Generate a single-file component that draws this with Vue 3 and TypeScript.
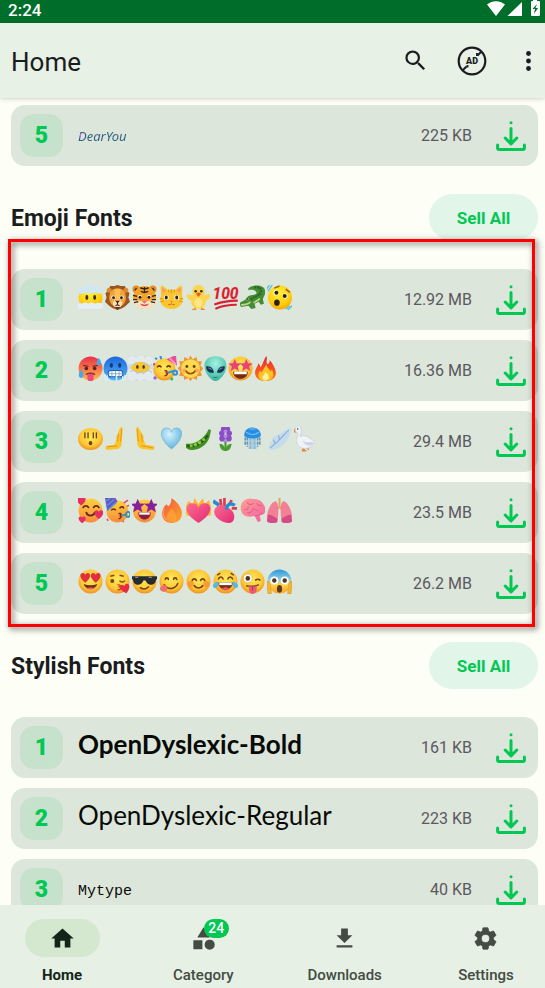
<script setup lang="ts">
import { ref } from 'vue'

interface FontItem {
  name: string
  size: string
  look?: 'handwritten' | 'bold' | 'regular' | 'typewriter'
  emojis?: string[]
  tight?: boolean
}

interface FontSection {
  title: string
  marked: boolean
  items: FontItem[]
}

const recent: FontItem = { name: 'DearYou', size: '225 KB', look: 'handwritten' }

const sections: FontSection[] = [
  {
    title: 'Emoji Fonts',
    marked: true,
    items: [
      { name: 'Emoji set 1', size: '12.92 MB', emojis: ['mist', 'lion', 'tiger', 'cat', 'chick', 'hundred', 'croc', 'shaking'] },
      { name: 'Emoji set 2', size: '16.36 MB', tight: true, emojis: ['hot', 'cold', 'clouds', 'party', 'sun', 'alien', 'starred', 'fire'] },
      { name: 'Emoji set 3', size: '29.4 MB', emojis: ['wide', 'palm-right', 'palm-left', 'blue-heart', 'pea', 'hyacinth', 'jellyfish', 'wing', 'goose'] },
      { name: 'Emoji set 4', size: '23.5 MB', emojis: ['loving', 'party-stripe', 'starred-violet', 'flame', 'heart-fire', 'organ-heart', 'brain', 'lungs'] },
      { name: 'Emoji set 5', size: '26.2 MB', emojis: ['heart-eyes', 'kiss', 'cool', 'yum', 'blush', 'joy', 'zany', 'scream'] },
    ],
  },
  {
    title: 'Stylish Fonts',
    marked: false,
    items: [
      { name: 'OpenDyslexic-Bold', size: '161 KB', look: 'bold' },
      { name: 'OpenDyslexic-Regular', size: '223 KB', look: 'regular' },
      { name: 'Mytype', size: '40 KB', look: 'typewriter' },
    ],
  },
]

const tabs = [
  { id: 'home', label: 'Home', count: 0 },
  { id: 'category', label: 'Category', count: 24 },
  { id: 'downloads', label: 'Downloads', count: 0 },
  { id: 'settings', label: 'Settings', count: 0 },
]
const active = ref('home')
</script>

<template>
  <div class="screen">
    <svg class="sprites" width="0" height="0" aria-hidden="true">
      <defs>
        <radialGradient id="g-face" cx=".5" cy=".4" r=".62">
          <stop offset="0" stop-color="#ffe85c" /><stop offset=".65" stop-color="#fdc935" /><stop offset="1" stop-color="#f08c1c" />
        </radialGradient>
        <linearGradient id="g-warm" x1="0" y1="0" x2="0" y2="1">
          <stop offset="0" stop-color="#ffd23c" /><stop offset="1" stop-color="#fb8b3c" />
        </linearGradient>
        <radialGradient id="g-yellow" cx=".45" cy=".3" r=".75">
          <stop offset="0" stop-color="#fff13b" /><stop offset=".7" stop-color="#ffcb0a" /><stop offset="1" stop-color="#ef9d0b" />
        </radialGradient>
        <linearGradient id="g-hot" x1="0" y1="0" x2="0" y2="1">
          <stop offset="0" stop-color="#e8304a" /><stop offset=".55" stop-color="#fa7a4a" /><stop offset="1" stop-color="#fdc04d" />
        </linearGradient>
        <linearGradient id="g-cold" x1="0" y1="0" x2="0" y2="1">
          <stop offset="0" stop-color="#1c67de" /><stop offset="1" stop-color="#52b4fa" />
        </linearGradient>
        <linearGradient id="g-scream" x1="0" y1="0" x2="0" y2="1">
          <stop offset="0" stop-color="#2c9ade" /><stop offset=".42" stop-color="#8fcde0" /><stop offset=".62" stop-color="#ffd64f" /><stop offset="1" stop-color="#f6a325" />
        </linearGradient>
        <radialGradient id="g-alien" cx=".5" cy=".3" r=".7">
          <stop offset="0" stop-color="#a6f2e4" /><stop offset="1" stop-color="#36b39c" />
        </radialGradient>
        <radialGradient id="g-heart" cx=".4" cy=".3" r=".7">
          <stop offset="0" stop-color="#d3f3ff" /><stop offset="1" stop-color="#62b4e0" />
        </radialGradient>
        <linearGradient id="g-pink" x1="0" y1="0" x2="1" y2="1">
          <stop offset="0" stop-color="#ff6b8e" /><stop offset="1" stop-color="#df2b76" />
        </linearGradient>
        <linearGradient id="g-brain" x1="0" y1="0" x2="1" y2="1">
          <stop offset="0" stop-color="#ffa08f" /><stop offset="1" stop-color="#f261a0" />
        </linearGradient>
        <linearGradient id="g-fire" x1="0" y1="0" x2="0" y2="1">
          <stop offset="0" stop-color="#e8242c" /><stop offset="1" stop-color="#ff7a1c" />
        </linearGradient>
        <linearGradient id="g-flame" x1="0" y1="0" x2="1" y2="1">
          <stop offset="0" stop-color="#ef5340" /><stop offset="1" stop-color="#ffa928" />
        </linearGradient>
        <path id="p-heart" d="M0 4.2C-6-.2-4.6-4.2-2.2-4.2-.8-4.2 0-3 0-2.4 0-3 .8-4.2 2.2-4.2 4.6-4.2 6-.2 0 4.2Z" />
        <path id="p-star" d="M0-4.6 1.3-1.5 4.6-1.3 2.1.8 2.9 4.1 0 2.3-2.9 4.1-2.1.8-4.6-1.3-1.3-1.5Z" />
      </defs>

      <symbol id="mist" viewBox="0 0 24 24">
        <ellipse cx="12" cy="12.500" rx="11.500" ry="10.500" fill="url(#g-yellow)" />
        <path d="M0 6c-1-3 3-5 5-3 2-4 7-4 9-1 3-2 6-1 7 1 3 0 4 3 1 5-3 1-5-1-7 0-3 1-5-1-8 0-2 1-6 1-7-2Z" fill="#d2e6f1" />
        <path d="M0 21c-1-3 2-4 4-3 2-2 5-1 6 0 2-2 5-1 6 0 3-2 8-1 8 2 0 4-5 3-8 3H5c-3 0-5 0-5-2Z" fill="#e4eff5" />
        <ellipse cx="8.500" cy="12" rx="1.400" ry="2.300" fill="#34311f" /><ellipse cx="16" cy="12" rx="1.400" ry="2.300" fill="#34311f" />
      </symbol>

      <symbol id="lion" viewBox="0 0 24 24">
        <path d="M12 0 15 1 19 1 21 5 23.500 8 22.500 12 24 16 20 20 17 22 12 24 7 22 4 20 0 16 1.500 12 .5 8 3 5 5 1 9 1Z" fill="#9a5520" />
        <circle cx="4" cy="5" r="2.400" fill="#d98a33" /><circle cx="20" cy="5" r="2.400" fill="#d98a33" />
        <path d="M12 3c5 0 8 4 8 9 0 6-4 9-8 9s-8-3-8-9c0-5 3-9 8-9Z" fill="#f0a336" />
        <path d="M9 4h6l-1 9 3 3-2 5H9l-2-5 3-3Z" fill="#fbbf55" />
        <circle cx="8" cy="12" r="2" fill="#fff" /><circle cx="16" cy="12" r="2" fill="#fff" />
        <circle cx="8.200" cy="12.200" r="1.400" fill="#2a2018" /><circle cx="15.800" cy="12.200" r="1.400" fill="#2a2018" />
        <ellipse cx="12" cy="18" rx="4.500" ry="3" fill="#f6e2c0" /><path d="M9.800 15h4.400L12 18Z" fill="#4a2418" />
        <path d="M12 17v2l-2 1m2-1 2 1" stroke="#4a2418" fill="none" /><path d="M10 21h4l-2 3Z" fill="#5b301b" />
      </symbol>

      <symbol id="tiger" viewBox="0 0 24 24">
        <circle cx="4" cy="4" r="3.500" fill="#e58b20" /><circle cx="20" cy="4" r="3.500" fill="#e58b20" />
        <circle cx="4" cy="4.500" r="1.600" fill="#5a351b" /><circle cx="20" cy="4.500" r="1.600" fill="#5a351b" />
        <path d="M12 1c6 0 11 5 11 12 0 5-5 10-11 10S1 18 1 13C1 6 6 1 12 1Z" fill="#f7a327" />
        <path d="M1 14c2 0 5 2 11 1 6 1 9-1 11-1 0 5-5 9-11 9S1 19 1 14Z" fill="#fae1b9" />
        <path d="M8 2.500c2 1.600 6 1.600 8 0M8.500 6c2 1.400 5 1.400 7 0M12 2v6M1 10l4 1M23 10l-4 1M1 14l4 0m18 0-4 0M2 17l4-1m16 1-4-1" stroke="#2d241b" stroke-width="1.300" fill="none" />
        <circle cx="7.500" cy="11.500" r="2" fill="#fff" /><circle cx="16.500" cy="11.500" r="2" fill="#fff" />
        <circle cx="7.700" cy="11.700" r="1.500" fill="#231d16" /><circle cx="16.300" cy="11.700" r="1.500" fill="#231d16" />
        <path d="M9.500 15h5L12 18Z" fill="#e8678b" /><path d="M8 18c1 3 7 3 8 0l-4 1Z" fill="#db3a63" />
      </symbol>

      <symbol id="cat" viewBox="0 0 24 24">
        <path d="M2 1c1-1 5 2 6 3.500h8C17 3 21 0 22 1c1 2 0 7 0 9 3 7-2 13-10 13S-1 17 2 10C2 8 1 3 2 1Z" fill="#fdc62f" />
        <path d="M3 2.500 7 5 3.500 8ZM21 2.500 17 5l3.500 3Z" fill="#f39a75" />
        <path d="M12 4v4M9 4.500l.5 2.500M15 4.500 14.500 7M1 13h3M23 13h-3M1.500 16l3-.5m18 .5-3-.5" stroke="#e89a1b" stroke-width="1.200" />
        <circle cx="7" cy="12" r="2.400" fill="#f5f8dc" /><circle cx="17" cy="12" r="2.400" fill="#f5f8dc" />
        <ellipse cx="7" cy="12" rx="1.400" ry="1.900" fill="#262222" /><ellipse cx="17" cy="12" rx="1.400" ry="1.900" fill="#262222" />
        <path d="M10.700 15.500h2.600L12 17Z" fill="#ef5575" /><path d="M9 18.500c1 .8 2 .5 3-.5 1 1 2 1.300 3 .5" stroke="#c87315" fill="none" />
      </symbol>

      <symbol id="chick" viewBox="0 0 24 24">
        <path d="M9 21v2.500H6m9-2.500v2.500h3" stroke="#ea8b1b" stroke-width="1.500" fill="none" />
        <path d="M12 0c4 0 6 3 6 7l-.5 3L23 8.500c1 4-2 6-4 6.500 0 5-3 7.500-7 7.500S5 20 5 15C3 14.500 0 12.500 1 8.500L6.500 10 6 7c0-4 2-7 6-7Z" fill="#fcd54c" />
        <ellipse cx="12" cy="17" rx="4" ry="4.500" fill="#ffe684" />
        <circle cx="9.300" cy="6" r="1.200" fill="#35291c" /><circle cx="14.700" cy="6" r="1.200" fill="#35291c" />
        <path d="M9.500 8.500 12 7l2.500 1.500L12 11.500Z" fill="#e85a20" />
      </symbol>

      <symbol id="croc" viewBox="0 0 24 24">
        <path d="M8 3C14-1 23 0 24 5c1 5-2 6-2 9l1 4-3 1-2-3-4 2 1 4-4 1-3-3-7 1-2-3c1-2 5-2 7-5 3-5 8-2 10-5 0-3-4-4-8-3Z" fill="#428c35" />
        <path d="M14 2c5 0 7 2 6 5-2 5-7 3-10 8" stroke="#276020" stroke-width="2" stroke-dasharray="1.500 1" fill="none" />
        <path d="M1 19c3 0 7 0 9-3M13 17c2-1 4-2 6-4" stroke="#c5d78c" stroke-width="1.600" fill="none" /><circle cx="7" cy="13.500" r="1.500" fill="#87b849" /><circle cx="7" cy="13.500" r=".7" fill="#182b12" />
      </symbol>

      <symbol id="shaking" viewBox="0 0 24 24">
        <path d="M-1 5 3-1M1 6 5 0M20 24l5-5M18 23l4-3" stroke="#49b9da" stroke-width="1.100" />
        <circle cx="12.500" cy="12" r="11.500" fill="url(#g-yellow)" />
        <path d="M7 3 12 1M18 4l4 3" stroke="#a25e08" stroke-width="1.400" fill="none" />
        <ellipse cx="8.500" cy="7.500" rx="2.200" ry="2.600" fill="#fff" /><ellipse cx="17.500" cy="10.500" rx="2.200" ry="2.600" fill="#fff" />
        <circle cx="9" cy="7.500" r="1.900" fill="#282013" /><circle cx="17" cy="10.500" r="1.900" fill="#282013" />
        <ellipse cx="9.500" cy="17" rx="2.700" ry="3" fill="#302010" />
      </symbol>

      <symbol id="hot" viewBox="0 0 24 24">
        <circle cx="12" cy="12" r="11.500" fill="url(#g-hot)" />
        <path d="M5 9l5 1M19 9l-5 1" stroke="#7a291d" stroke-width="1.300" />
        <circle cx="8" cy="12" r="1.700" fill="#51261c" /><circle cx="16" cy="12" r="1.700" fill="#51261c" />
        <path d="M7 18c2-3 8-3 10 0Z" fill="#702319" /><path d="M9 17h6v5c0 3-6 3-6 0Z" fill="#ee4d79" />
        <path d="M20 2c3 4 3 7 0 7s-3-3 0-7ZM3 13c3 4 3 8 0 8s-3-4 0-8Z" fill="#4ba7e9" />
      </symbol>

      <symbol id="cold" viewBox="0 0 24 24">
        <circle cx="12" cy="12" r="11.500" fill="url(#g-cold)" />
        <ellipse cx="8" cy="9" rx="1.500" ry="2.200" fill="#163a72" /><ellipse cx="16" cy="9" rx="1.500" ry="2.200" fill="#163a72" />
        <rect x="5" y="14" width="14" height="6" rx="2.500" fill="#f6fbff" stroke="#225d9f" />
        <path d="M5 17h14M8.500 14v6m3.500-6v6m3.500-6v6" stroke="#6b9fc5" stroke-width=".7" />
        <path d="M2 18v4m2-3v5m15-4v4m2-5v4M13 20v4" stroke="#d6f0ff" stroke-width="1.500" stroke-linecap="round" />
      </symbol>

      <symbol id="clouds" viewBox="0 0 24 24">
        <rect width="25" height="24" x="-.5" rx="3" fill="#d0dce3" />
        <g fill="#e3eaee"><circle cx="4" cy="5" r="5" /><circle cx="20" cy="5" r="5" /><circle cx="12" cy="3" r="4" /><circle cx="4" cy="18" r="6" /><circle cx="12" cy="20" r="4" /><circle cx="20" cy="18" r="6" /></g>
        <ellipse cx="12" cy="11" rx="9" ry="5.500" fill="#f8c832" />
        <path d="M1 8c3 2 5 1 7-2m7 0c2 3 5 4 8 2M2 15c3-2 6-1 7 2 2-2 4-2 6 0 2-4 6-4 8-1" stroke="#b7c8d3" fill="none" />
        <ellipse cx="9" cy="10.500" rx="1.200" ry="1.800" fill="#4a3519" /><ellipse cx="15" cy="10.500" rx="1.200" ry="1.800" fill="#4a3519" />
      </symbol>

      <symbol id="party" viewBox="0 0 24 24">
        <circle cx="11" cy="13" r="10.500" fill="url(#g-face)" /><path d="M13 3 22-1 23 9Z" fill="#ee4b98" /><path d="m16 2 6 6" stroke="#f6a2cb" stroke-width="1.500" />
        <path d="M4 11c1-2 3-2 4 0m5 0c1-2 3-2 4 0" stroke="#68361b" stroke-width="1.500" fill="none" />
        <path d="M11 14c4 0 2 2 1 2 3 0 2 3-1 3" stroke="#9c3020" stroke-width="1.500" fill="none" />
        <path d="m14 16 7-2c3 0 3 4 0 4-2 0-2-2-1-2" stroke="#2f93d8" stroke-width="2" fill="none" />
        <path d="M2 2l2 1M7 0l1 3" stroke="#2f93d8" stroke-width="2" /><circle cx="2" cy="21" r="1.500" fill="#935bd0" /><circle cx="18" cy="22" r="1.500" fill="#44b75c" /><circle cx="1" cy="8" r="1.200" fill="#e34779" />
      </symbol>

      <symbol id="sun" viewBox="0 0 24 24">
        <path d="M12-.5 14 3l4-2 .5 4 4.500 0-1.500 4 3 3-3 3L23 19l-4.500.5L18 23l-4-2-2 3.500L10 21l-4 2-.5-3.500L1 19l1.500-4-3-3 3-3L1 5h4.500L6 1l4 2Z" fill="#ef962e" />
        <circle cx="12" cy="12" r="9" fill="#fcd94f" /><circle cx="8.500" cy="10" r="1.400" fill="#654019" /><circle cx="15.500" cy="10" r="1.400" fill="#654019" />
        <circle cx="6" cy="14" r="2" fill="#fba55e" /><circle cx="18" cy="14" r="2" fill="#fba55e" /><path d="M7.500 14c2 4 7 4 9 0" stroke="#a14a18" stroke-width="1.500" fill="none" />
      </symbol>

      <symbol id="alien" viewBox="0 0 24 24">
        <path d="M12 .3c7 0 11 4 10.500 10C22 17 16 24 12 24S2 17 1.500 10.300C1 4 5 .3 12 .3Z" fill="url(#g-alien)" />
        <path d="M3 10c4-1 7 2 7.500 6C6 17 3 14 3 10Zm18 0c-4-1-7 2-7.500 6 4.500 1 7.500-2 7.500-6Z" fill="#173153" />
        <path d="M5 11.500c2 0 3 1 3.500 2M19 11.500c-2 0-3 1-3.500 2" stroke="#5887ae" fill="none" /><path d="M10 20c1.500 1 2.500 1 4 0" stroke="#247266" fill="none" />
      </symbol>

      <symbol id="starred" viewBox="0 0 24 24">
        <circle cx="12" cy="12" r="11.500" fill="url(#g-face)" />
        <use href="#p-star" transform="translate(6.500 9) scale(1.350)" fill="#e9427b" /><use href="#p-star" transform="translate(17.500 9) scale(1.350)" fill="#e9427b" />
        <path d="M5 15h14c0 9-14 9-14 0Z" fill="#762a1c" /><path d="M6 15h12v2.500H6Z" fill="#fff" />
      </symbol>

      <symbol id="fire" viewBox="0 0 24 24">
        <path d="M13 0c1 4-1 5 1 8 2-1 2-3 2-4 3 3 6 9 6 12 0 5-4 8-10 8S2 21 2 16c0-4 3-6 3-9 1 1 2 2 2 4 3-3 3-8 6-11Z" fill="url(#g-fire)" />
        <path d="M13 8c0 4 3 4 4 7l1-2c4 6 0 11-6 11s-9-5-5-10l1 2c2-3 3-5 5-8Z" fill="#ffc323" /><path d="M12 15c1 2 4 3 3 6-1 3-6 3-6 0 0-2 2-3 3-6Z" fill="#fff1a0" />
      </symbol>

      <symbol id="wide" viewBox="0 0 24 24">
        <ellipse cx="12" cy="11.500" rx="12" ry="10.500" fill="url(#g-face)" />
        <g fill="#6b4516"><rect x="6" y="5" width="1.300" height="6" rx=".6" /><rect x="9" y="5" width="1.300" height="6" rx=".6" /><rect x="14" y="5" width="1.300" height="6" rx=".6" /><rect x="17" y="5" width="1.300" height="6" rx=".6" /><ellipse cx="12" cy="15.500" rx="1.700" ry="2" /></g>
      </symbol>

      <symbol id="palm-right" viewBox="0 0 24 24">
        <path d="M14 2c1-3 3-2 3 0l-1 13c0 4-2 6-5 6l-9 1c-2 0-2-4 0-4l7-1 2-5c0-2-1-4 1-4 1-3 1-4 2-6Z" fill="#fbc52b" />
        <path d="m16 2-1 12m-2-8-1 8m0 4-10 1" stroke="#dc8f12" stroke-width=".8" fill="none" />
      </symbol>

      <symbol id="palm-left" viewBox="0 0 24 24">
        <path d="M7 2C6-1 4 0 4 2l1 13c0 4 3 6 6 6l9 1c2 0 2-4 0-4l-7-1-2-5c0-2 1-4-1-4-1-3-2-4-3-6Z" fill="#fbc52b" />
        <path d="m5 2 1 12m3-8 1 8m-1 4 11 2" stroke="#dc8f12" stroke-width=".8" fill="none" />
      </symbol>

      <symbol id="blue-heart" viewBox="0 0 24 24"><path d="M12 21C-1 11 1 1 7 1c3 0 5 2 5 4 0-2 2-4 5-4 6 0 8 10-5 20Z" fill="url(#g-heart)" stroke="#6babc9" stroke-width=".6" /></symbol>

      <symbol id="pea" viewBox="0 0 24 24">
        <path d="M-1 16c8 1 14-2 20-9l3-5 2 1-1 5c-1 8-10 15-18 14-4 0-7-3-6-6Z" fill="#428e24" />
        <path d="M1 18c8 2 15-3 20-10" stroke="#1f5b17" stroke-width="2" fill="none" /><g fill="#8cc63c"><circle cx="5" cy="18" r="1.500" /><circle cx="9" cy="17" r="1.700" /><circle cx="13" cy="15" r="1.700" /><circle cx="17" cy="12" r="1.500" /></g>
      </symbol>

      <symbol id="hyacinth" viewBox="0 0 24 24">
        <path d="M12 13v10" stroke="#4a932f" stroke-width="2" /><path d="M12 23c-5 0-5-4-6-7 4 0 5 3 6 5 1-2 2-5 6-5-1 3-1 7-6 7Z" fill="#499b36" />
        <g fill="#8950c6"><circle cx="10" cy="2" r="2.500" /><circle cx="14" cy="2" r="2.500" /><circle cx="8.500" cy="6" r="2.700" /><circle cx="15.500" cy="6" r="2.700" /><circle cx="9" cy="11" r="3" /><circle cx="15" cy="11" r="3" /></g><g fill="#b388e3"><circle cx="12" cy="4" r="1.700" /><circle cx="12" cy="9" r="1.700" /><circle cx="12" cy="13" r="1.500" /></g>
      </symbol>

      <symbol id="jellyfish" viewBox="0 0 24 24">
        <path d="M7 10v9m3-9v11m4-11v11m3-11v9M5 10v7m14-7v7" stroke="#6294ba" stroke-width="1.500" stroke-dasharray="3 1" /><path d="M8 9h8v12H8Z" fill="#9bc4dc" opacity=".7" />
        <path d="M4 8C4-2 20-2 20 8c0 4-16 4-16 0Z" fill="#278ee3" /><path d="M6 5c4 3 8 3 12 0M9 2l6 0" stroke="#72c6fa" fill="none" />
      </symbol>

      <symbol id="wing" viewBox="0 0 24 24">
        <path d="M23 1c-1 9-4 14-9 17-3 3-8 4-11 4l-2-3 3-2-2-2 4-3-1-2 5-2C13 7 17 2 23 1Z" fill="#c4dced" /><path d="M21 3c-5 4-7 9-18 17M11 8l1 4m-6 0 2 4" stroke="#88adcc" fill="none" />
      </symbol>

      <symbol id="goose" viewBox="0 0 24 24">
        <path d="m-2 4 5-3v4ZM9 20l-1 3 4 0m1-3 1 2" fill="#e7863a" stroke="#e7863a" stroke-width="1.200" />
        <path d="M1 2c1-4 6-3 6 1l-1 6c5-2 8 1 14 5l-2 3c-3 5-13 5-15-1-2-4 1-7 1-10-1 0-3-1-3-4Z" fill="#eff2f7" stroke="#bbc8d7" stroke-width=".6" /><circle cx="3.500" cy="2" r=".7" fill="#29384b" /><path d="M8 13c4 3 8 1 11 2-2 4-8 4-11-2Z" fill="#cbd5e5" />
      </symbol>

      <symbol id="loving" viewBox="0 0 24 24">
        <circle cx="12" cy="12" r="11.500" fill="url(#g-warm)" /><path d="M5 9c1-2 4-2 5 0m5 0c1-2 4-2 5 0M8 14c1 4 7 4 8 0" stroke="#5d2a22" stroke-width="1.700" fill="none" stroke-linecap="round" />
        <use href="#p-heart" transform="translate(3 3)" fill="#e62c60" /><use href="#p-heart" transform="translate(20 16)" fill="#e62c60" /><use href="#p-heart" transform="translate(4 21) scale(.8)" fill="#e62c60" />
      </symbol>

      <symbol id="party-stripe" viewBox="0 0 24 24">
        <circle cx="12" cy="13" r="10.500" fill="url(#g-warm)" /><path d="M0 0h10l2 3L2 12Z" fill="#7d4ac6" /><path d="m1 8 8-7M1 3l4-3M2 12l9-8" stroke="#3b9ad9" stroke-width="1.500" />
        <path d="M6 12c1-2 4-2 4 0m4-2c1-2 4-2 4 0" stroke="#67301b" stroke-width="1.500" fill="none" /><path d="M13 15c4-1 2 2 1 2 3 0 1 3-1 3" stroke="#783020" stroke-width="1.500" fill="none" />
        <path d="m16 17 4-1c0-4 5-3 4 0-1 4-5 2-3 0" stroke="#2c91bd" stroke-width="1.700" fill="none" /><path d="m18 5 4-3m-1 6 2-1M2 20l1 2m14 1 1-1" stroke="#e84779" stroke-width="1.500" />
      </symbol>

      <symbol id="starred-violet" viewBox="0 0 24 24">
        <circle cx="12" cy="12.500" r="11" fill="url(#g-warm)" />
        <use href="#p-star" transform="translate(5.500 7.500) scale(1.500)" fill="#87209c" /><use href="#p-star" transform="translate(18.500 7.500) scale(1.500)" fill="#87209c" /><path d="M6 14h12c0 9-12 9-12 0Z" fill="#87223d" /><path d="M7 14h10v2H7Z" fill="#fff" />
      </symbol>

      <symbol id="flame" viewBox="0 0 24 24"><path d="M12 0c7 5 10 10 10 15 0 6-4 9-10 9S3 20 3 15c0-4 2-7 4-9l2 2c2-2 3-4 3-8Z" fill="url(#g-flame)" /><path d="M12 10c7 7 6 13 1 13-7 0-8-5-1-13Z" fill="#ffa33a" opacity=".8" /><path d="M5 10c-2 5 0 9 2 11" stroke="#f9a16e" fill="none" /></symbol>

      <symbol id="heart-fire" viewBox="0 0 24 24"><path d="M1 17C-3 8 1 8 2 3c2 0 3 2 4 3 2-1 1-4 2-6l4 6 4-6 2 6 4-4c3 9 3 12 1 15Z" fill="#ffb32e" /><path d="M12 24C-3 15-1 5 6 5c4 0 6 3 6 5 0-2 2-5 6-5 7 0 9 10-6 19Z" fill="url(#g-pink)" /></symbol>

      <symbol id="organ-heart" viewBox="0 0 24 24"><path d="M8 8 7 1m4 7V0m4 7 3-5m0 8h5" stroke="#e23b4f" stroke-width="2.600" /><path d="M6 7 0 3" stroke="#268bd0" stroke-width="3.500" /><path d="M2 10c4-6 11-3 16 2 4 4 3 12-3 12C8 24-2 17 2 10Z" fill="url(#g-pink)" /><path d="M13 11c0-6 5-6 8-4" stroke="#268bd0" stroke-width="3.200" fill="none" /></symbol>

      <symbol id="brain" viewBox="0 0 24 24"><path d="M1 12C-1 3 7-1 13 1c7-1 13 7 11 13-2 3-4 2-5 3l1 5-3 1-3-6c-5 2-12 1-13-5Z" fill="url(#g-brain)" /><path d="M4 11c3 1 4-1 4-3m-1-4c1 3 4 3 6 1m-1 5c3 0 3 3 6 2m-2-7c1 2 3 3 5 2M7 14c3 1 5-1 5-3m2 6c3 0 6-1 7-3" stroke="#e35d92" stroke-width="1" fill="none" /></symbol>

      <symbol id="lungs" viewBox="0 0 24 24"><path d="M12 0v10m0-2-3 4m3-4 3 4" stroke="#dca764" stroke-width="2" fill="none" /><path d="M8 3c4 0 3 15 2 19-3 3-9 2-10 0C-1 15 3 4 8 3Zm8 0c-4 0-3 15-2 19 3 3 9 2 10 0 1-7-3-18-8-19Z" fill="#f38096" /><path d="M1 16c3 0 5 1 9 4v3c-3 2-10 1-10-1Zm22 0c-3 0-5 1-9 4v3c3 2 10 1 10-1Z" fill="#d54b86" /></symbol>

      <symbol id="heart-eyes" viewBox="0 0 24 24"><circle cx="12" cy="12" r="11.500" fill="url(#g-face)" /><use href="#p-heart" transform="translate(7 8.500) scale(1.100)" fill="#e12e3f" /><use href="#p-heart" transform="translate(17 8.500) scale(1.100)" fill="#e12e3f" /><path d="M5.500 14.500c4 1.500 9 1.500 13 0-1 6-12 6-13 0Z" fill="#6b351a" /><path d="M8 18.500c2-1 6-1 8 0-2 1.500-6 1.500-8 0Z" fill="#ee5c6c" /></symbol>

      <symbol id="kiss" viewBox="0 0 24 24"><circle cx="12" cy="12" r="11.500" fill="url(#g-face)" /><circle cx="7" cy="11.500" r="1.900" fill="#72431c" /><path d="M5 7l4-1M14 6l4 1m-4 4c1 2 4 2 5 0" stroke="#874b1a" stroke-width="1.400" fill="none" /><path d="M12 15c4 0 3 2 1 2 3 0 3 3-1 3" stroke="#c44732" stroke-width="1.300" fill="none" /><use href="#p-heart" transform="translate(19.500 19) rotate(-15) scale(1.050)" fill="#e72c42" /></symbol>

      <symbol id="cool" viewBox="0 0 24 24"><circle cx="12" cy="12" r="11.500" fill="url(#g-face)" /><path d="M0 7h24v3h-1c0 6-8 7-10 1h-2C9 17 1 16 1 10H0Z" fill="#252b2f" /><path d="m3 8 3 0m10 0 3 0" stroke="#808b91" stroke-width="1.300" /><path d="M8 18c3 2 6 1 8-1" stroke="#74451e" stroke-width="1.500" fill="none" stroke-linecap="round" /></symbol>

      <symbol id="yum" viewBox="0 0 24 24"><circle cx="12" cy="12" r="11.500" fill="url(#g-face)" /><path d="M6 10c0-2 3-2 3 0m5 0c0-2 3-2 3 0M5 15c4 6 11 4 13-1" stroke="#704019" stroke-width="1.500" fill="none" stroke-linecap="round" /><path d="M5 15c4 1 4 6 0 7-4 0-6-4-2-6Z" fill="#ed716c" /></symbol>

      <symbol id="blush" viewBox="0 0 24 24"><circle cx="12" cy="12" r="11.500" fill="url(#g-face)" /><circle cx="4.500" cy="14.500" r="3" fill="#fb8d32" opacity=".8" /><circle cx="19.500" cy="14.500" r="3" fill="#fb8d32" opacity=".8" /><path d="M6 11c1-2 3-2 4 0m4 0c1-2 3-2 4 0M8 16c2 3 6 3 8 0" stroke="#704019" stroke-width="1.600" fill="none" stroke-linecap="round" /></symbol>

      <symbol id="joy" viewBox="0 0 24 24"><circle cx="12" cy="12" r="11.500" fill="url(#g-face)" /><path d="M5 10c1-3 4-3 5 0m4 0c1-3 4-3 5 0M4 6l3-2m10 0 3 2" stroke="#704019" stroke-width="1.400" fill="none" /><path d="M5 13h14c0 9-14 9-14 0Z" fill="#70301b" /><path d="M6 13h12v2.500H6Z" fill="#fff" /><path d="M8 19c3-2 5-2 8 0-2 2-6 2-8 0Z" fill="#ee5366" /><path d="M5 12c1 5-2 7-4 6-3-2 0-5 4-6Zm14 0c-1 5 2 7 4 6 3-2 0-5-4-6Z" fill="#58b9df" /></symbol>

      <symbol id="zany" viewBox="0 0 24 24"><circle cx="12" cy="12" r="11.500" fill="url(#g-face)" /><circle cx="7.500" cy="9" r="4.300" fill="#fff" stroke="#d9913a" stroke-width=".5" /><circle cx="7.500" cy="9" r="2.200" fill="#51331d" /><path d="M14.500 11c2-1.500 4-1.500 5 0M6 16c4 1 8 1 12-1" stroke="#704019" stroke-width="1.500" fill="none" /><path d="M8 16c3 1 5 1 8 0v4c0 5-7 5-7 1Z" fill="#ec5c71" /><path d="M12 17v4" stroke="#b53950" /></symbol>

      <symbol id="scream" viewBox="0 0 24 24"><circle cx="12" cy="12" r="11.500" fill="url(#g-scream)" /><path d="M0 12c3-1 4 5 4 12H1ZM24 12c-3-1-4 5-4 12h3Z" fill="#f7b634" stroke="#d9911f" stroke-width=".6" /><circle cx="7" cy="11" r="3.800" fill="#fff" /><circle cx="17" cy="11" r="3.800" fill="#fff" /><circle cx="7" cy="11" r="2.100" fill="#4d3425" /><circle cx="17" cy="11" r="2.100" fill="#4d3425" /><ellipse cx="12" cy="19" rx="2.500" ry="3.700" fill="#61391b" /></symbol>

      <symbol id="download" viewBox="0 0 30 30">
        <circle cx="15" cy="1.700" r="1.500" fill="#00c853" />
        <path d="M15 7.500v15M9.200 17l5.800 6 5.800-6M1.600 24v2.900q0 1.500 1.500 1.500h23.800q1.500 0 1.500-1.500v-2.900" fill="none" stroke="#00c853" stroke-width="3" stroke-linecap="round" stroke-linejoin="round" />
      </symbol>
    </svg>

    <div class="status">
      <span>2:24</span>
      <svg width="54" height="18" viewBox="0 0 54 18" fill="#fff" aria-hidden="true">
        <path d="M0 4.500C5 0 13 0 18 4.500L9 16Z" /><path d="M35 2v14H20.500Z" />
        <path d="M46 1V0h4v1h2q1 0 1 1v13q0 1-1 1h-7q-1 0-1-1V2q0-1 1-1Z" /><path d="m50 4-4.500 5h2.500l-1 5 4-6h-2.500Z" fill="#006e2b" />
      </svg>
    </div>

    <header class="appbar">
      <h1>Home</h1>
      <button type="button" aria-label="Search">
        <svg width="27" height="27" viewBox="0 0 24 24"><path fill="currentColor" d="M15.500 14h-.79l-.28-.27A6.470 6.470 0 0 0 16 9.500 6.500 6.500 0 1 0 9.500 16c1.610 0 3.090-.59 4.230-1.570l.27.28v.79l5 4.990L20.490 19l-4.990-5zm-6 0C7.010 14 5 11.990 5 9.500S7.010 5 9.500 5 14 7.010 14 9.500 11.990 14 9.500 14z" /></svg>
      </button>
      <button type="button" aria-label="Remove ads">
        <svg width="30" height="30" viewBox="0 0 30 30">
          <circle cx="15" cy="15" r="13.300" fill="none" stroke="currentColor" stroke-width="2.200" />
          <path d="m5.500 24.500 4-4m11-11 4-4m-4.500 1.500v3m-9.500 11.500v-2.500" fill="none" stroke="currentColor" stroke-width="1.900" />
          <text x="15" y="18" text-anchor="middle" font-size="9" font-weight="900" font-family="Roboto, sans-serif" fill="currentColor">AD</text>
        </svg>
      </button>
      <button type="button" aria-label="More options">
        <svg width="7" height="20" viewBox="0 0 7 20" fill="currentColor"><circle cx="3.500" cy="2.500" r="2.400" /><circle cx="3.500" cy="10" r="2.400" /><circle cx="3.500" cy="17.500" r="2.400" /></svg>
      </button>
    </header>

    <main class="content">
      <div class="card">
        <span class="rank">5</span>
        <span class="name"><span :class="recent.look">{{ recent.name }}</span></span>
        <span class="size">{{ recent.size }}</span>
        <button type="button" :aria-label="'Download ' + recent.name"><svg width="30" height="30"><use href="#download" /></svg></button>
      </div>

      <section v-for="section in sections" :key="section.title">
        <div class="heading">
          <h2>{{ section.title }}</h2>
          <button type="button" class="all">Sell All</button>
        </div>
        <ol class="list" :class="{ marked: section.marked }">
          <li v-for="(item, i) in section.items" :key="item.name" class="card">
            <span class="rank">{{ i + 1 }}</span>
            <span v-if="item.emojis" class="name emojis" :class="{ tight: item.tight }">
              <template v-for="e in item.emojis" :key="e">
                <svg v-if="e === 'hundred'" width="25" height="25" viewBox="0 0 24 24" role="img" aria-label="hundred">
                  <text x="12" y="13" text-anchor="middle" font-family="Roboto, sans-serif" font-size="15" font-weight="800" font-style="italic" fill="#db1f32">100</text>
                  <path d="M2 18.500C9 16 16 15 23 15M3 22.500c6-2.500 12-3.500 19-3.500" stroke="#db1f32" stroke-width="2" fill="none" stroke-linecap="round" />
                </svg>
                <svg v-else width="25" height="25" role="img" :aria-label="e"><use :href="'#' + e" /></svg>
              </template>
            </span>
            <span v-else class="name"><span :class="item.look">{{ item.name }}</span></span>
            <span class="size">{{ item.size }}</span>
            <button type="button" :aria-label="'Download ' + item.name"><svg width="30" height="30"><use href="#download" /></svg></button>
          </li>
        </ol>
      </section>
    </main>

    <nav class="tabs">
      <button v-for="tab in tabs" :key="tab.id" type="button" class="tab" :class="{ active: active === tab.id }" @click="active = tab.id">
        <span class="pill">
          <svg width="27" height="27" viewBox="0 0 24 24" fill="currentColor" aria-hidden="true">
            <path v-if="tab.id === 'home'" d="M10 20v-6h4v6h5v-8h3L12 3 2 12h3v8z" />
            <path v-else-if="tab.id === 'category'" d="m12 2-5.500 9h11zM17.500 13a4.500 4.500 0 1 0 0 9 4.500 4.500 0 0 0 0-9zM3 13.500h8v8H3z" />
            <path v-else-if="tab.id === 'downloads'" d="M19 9h-4V3H9v6H5l7 7 7-7zM5 18v2h14v-2H5z" />
            <path v-else d="M19.140 12.940c.04-.3.06-.61.06-.94 0-.32-.02-.64-.07-.94l2.030-1.580a.49.49 0 0 0 .12-.61l-1.920-3.320a.49.49 0 0 0-.59-.22l-2.390.96a7 7 0 0 0-1.620-.94l-.36-2.540a.48.48 0 0 0-.48-.41h-3.840a.47.47 0 0 0-.47.41l-.36 2.540c-.59.24-1.130.57-1.620.94l-2.390-.96a.48.48 0 0 0-.59.22L2.740 8.870a.48.48 0 0 0 .12.61l2.030 1.580c-.05.3-.09.63-.09.94s.02.64.07.94l-2.030 1.580a.49.49 0 0 0-.12.61l1.920 3.320c.12.22.37.29.59.22l2.390-.96c.5.38 1.030.7 1.620.94l.36 2.540c.05.24.24.41.48.41h3.840c.24 0 .44-.17.47-.41l.36-2.540c.59-.24 1.130-.56 1.620-.94l2.390.96c.22.08.47 0 .59-.22l1.920-3.320a.47.47 0 0 0-.12-.61zM12 15.600a3.600 3.600 0 1 1 0-7.200 3.600 3.600 0 0 1 0 7.200z" stroke="currentColor" stroke-width=".6" />
          </svg>
          <span v-if="tab.count" class="count">{{ tab.count }}</span>
        </span>
        <span class="label">{{ tab.label }}</span>
      </button>
    </nav>
  </div>
</template>

<style>
body {
  margin: 0;
  background: #fdfff7;
}
</style>

<style scoped>
.screen {
  display: flex;
  flex-direction: column;
  height: 100vh;
  background: #fdfff7;
  color: #1b1c20;
  font-family: Roboto, "Liberation Sans", sans-serif;
}
.sprites {
  position: absolute;
}
button {
  display: flex;
  align-items: center;
  justify-content: center;
  padding: 0;
  border: 0;
  background: none;
  color: inherit;
  font-family: inherit;
  cursor: pointer;
}
svg {
  display: block;
  flex: none;
}
.status {
  display: flex;
  justify-content: space-between;
  flex: none;
  height: 23px;
  padding: 0 4px 0 8px;
  background: #006e2b;
  color: #fff;
  font-size: 17px;
  font-weight: 500;
  line-height: 20px;
}
.appbar {
  position: relative;
  z-index: 1;
  display: flex;
  align-items: center;
  flex: none;
  gap: 28px;
  height: 75px;
  padding: 0 13px 0 11px;
  background: #e8f1e6;
  box-shadow: 0 1px 4px rgba(0, 0, 0, 0.18);
}
h1 {
  flex: 1;
  margin: 0;
  padding-top: 2px;
  font-size: 26px;
  font-weight: 400;
  line-height: 32px;
}
.appbar button:last-child {
  margin-left: 10px;
}
.content {
  flex: 1;
  min-height: 0;
  overflow-y: auto;
  scrollbar-width: none;
  padding: 7px 7px 0 11px;
}
.card {
  display: flex;
  align-items: center;
  box-sizing: border-box;
  height: 61px;
  padding: 0 12px 0 9px;
  border-radius: 14px;
  background: #dde6da;
}
.rank {
  width: 43px;
  margin-right: 15px;
  border-radius: 14px;
  background: #c6e2cc;
  color: #00c853;
  font-size: 23px;
  font-weight: 900;
  line-height: 43px;
  text-align: center;
}
.name {
  flex: 1;
  color: #080a08;
  white-space: nowrap;
}
.emojis {
  display: flex;
  gap: 2px;
  padding-bottom: 4px;
}
.emojis svg {
  overflow: visible;
}
.tight {
  gap: 0;
}
.size {
  margin-right: 24px;
  color: #5a5861;
  font-size: 16px;
  line-height: 20px;
}
.handwritten {
  background:
    radial-gradient(circle at 4px 9px, #f062df 2px, transparent 3px),
    radial-gradient(circle at 17px 6px, #f062df 2px, transparent 3px),
    radial-gradient(circle at 27px 13px, #f062df 2px, transparent 3px),
    radial-gradient(circle at 40px 6px, #f062df 2px, transparent 3px),
    #28607f;
  background-clip: text;
  color: transparent;
  font-family: "Noto Sans", sans-serif;
  font-size: 13px;
  font-style: italic;
}
.bold,
.regular {
  display: block;
  padding-bottom: 8px;
  font-family: Lato, sans-serif;
  font-size: 26px;
  line-height: 32px;
}
.bold {
  font-weight: 700;
}
.typewriter {
  font-family: "Liberation Mono", monospace;
  font-size: 15px;
}
.heading {
  display: flex;
  align-items: center;
  justify-content: space-between;
  margin: 28px 0;
}
h2 {
  margin: 0;
  padding-top: 2px;
  font-size: 23px;
  font-weight: 700;
  line-height: 28px;
}
.all {
  width: 109px;
  height: 47px;
  border-radius: 24px;
  background: #e1f6e8;
  color: #00c853;
  font-size: 17px;
  font-weight: 700;
}
.list {
  position: relative;
  display: grid;
  gap: 10px;
  margin: 0;
  padding: 0;
  list-style: none;
}
.marked::after {
  content: "";
  position: absolute;
  inset: -30px 3px -13px -3px;
  border: 3px solid #f00;
  filter: drop-shadow(2px 2px 3px rgba(0, 0, 0, 0.65));
  pointer-events: none;
}
.tabs {
  position: relative;
  display: flex;
  justify-content: space-between;
  flex: none;
  padding: 14px 0 4px 3px;
  background: #e6f0e4;
}
.tab {
  flex-direction: column;
  gap: 9px;
  width: 118px;
  color: #444b43;
}
.active {
  color: #142418;
}
.pill {
  position: relative;
  display: flex;
  align-items: center;
  justify-content: center;
  width: 75px;
  height: 38px;
  border-radius: 19px;
}
.active .pill {
  background: #d3e8cf;
}
.count {
  position: absolute;
  top: 0;
  left: 38px;
  width: 25px;
  border-radius: 10px;
  background: #00c853;
  color: #fff;
  font-size: 14px;
  font-weight: 500;
  line-height: 19px;
}
.label {
  font-size: 15px;
  font-weight: 500;
  line-height: 18px;
}
.active .label {
  font-weight: 700;
}
</style>
